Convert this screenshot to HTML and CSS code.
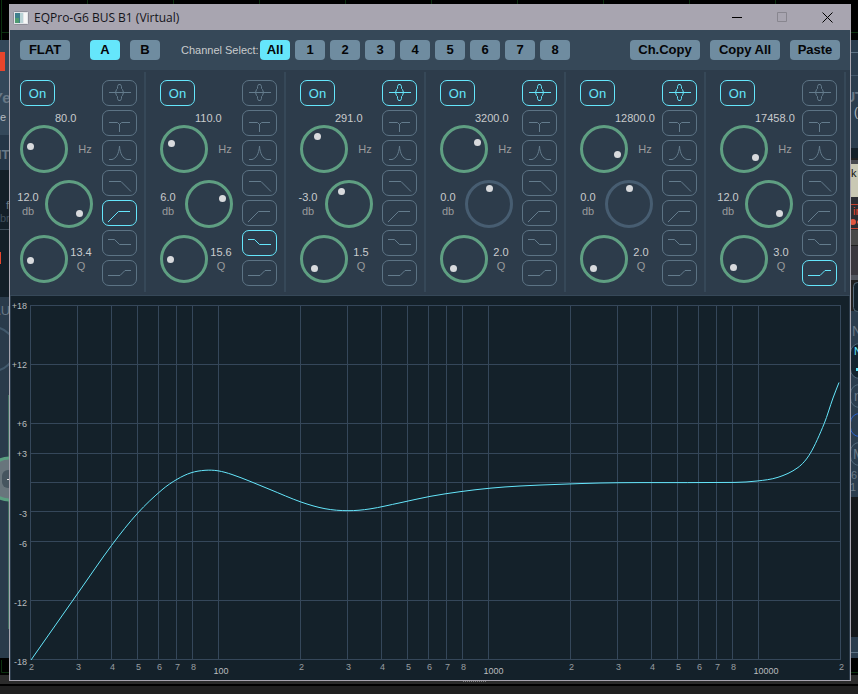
FILE: index.html
```html
<!DOCTYPE html>
<html lang="en">
<head>
<meta charset="utf-8">
<title>EQPro-G6 BUS B1 (Virtual)</title>
<link rel="stylesheet" href="styles.css">
</head>
<body>
<svg class="backdrop backdrop-left" viewBox="0 0 9 694" width="9" height="694" aria-hidden="true">
  <path fill="#000" d="M0 0h9v40H0z"/>
  <path fill="none" stroke="#0b300f" d="M1.5 0V40M2 32.5h7"/>
  <path fill="#34485a" d="M0 40h9v95H0z"/>
  <path fill="#e8452c" d="M0 52h5v19H0z"/>
  <text class="bold dim" x="-7" y="103" font-size="15">Ye</text>
  <text class="light" x="0" y="121" font-size="11">e</text>
  <path fill="#253647" d="M0 135h9v35H0z"/>
  <text class="bold dim" x="-2" y="159" font-size="13">IT</text>
  <path fill="#131f28" d="M0 170h9v127H0z"/>
  <text class="dim" x="6" y="209" font-size="11">f</text>
  <text class="faint" x="0" y="222" font-size="11">br</text>
  <path stroke="#3c4b57" d="M0 229.5h9"/>
  <path fill="#e8452c" d="M0 252h1v12H0z"/>
  <path fill="#2a3b4b" d="M0 297h9v361H0z"/>
  <text class="dim" x="-8" y="315" font-size="13">AU</text>
  <circle cx="-7" cy="349" r="22" fill="none" stroke="#42596c" stroke-width="2"/>
  <path stroke="#3f6f60" d="M8.500 395v234"/>
  <circle cx="9" cy="479" r="21" fill="#68757c" stroke="#5a9f80" stroke-width="3"/>
  <rect x="2" y="470" width="14" height="18" rx="6" fill="#46555f"/>
  <path stroke="#ddd" d="M7 479.500h2"/>
  <path fill="#000" d="M0 658h9v17H0z"/>
  <path fill="none" stroke="#0b300f" d="M1.5 660v12.500H9"/>
  <path fill="#2b2b2b" d="M0 675h9v10H0z"/>
  <path fill="#000" d="M0 684h9v2H0z"/>
</svg>
<svg class="backdrop backdrop-right" viewBox="851 0 7 694" width="7" height="694" aria-hidden="true">
  <path fill="#000" d="M851 0h7v40h-7z"/>
  <path stroke="#0b300f" d="M851 32.500h7"/>
  <path fill="#2b3d4e" d="M851 40h7v108h-7z"/>
  <path stroke="#5b7183" d="M851 52.500h7"/>
  <path stroke="#42566a" d="M851 75.500h7"/>
  <text class="bold dim" x="845" y="102" font-size="14">UT</text>
  <text class="light" x="854" y="116" font-size="12">(</text>
  <path fill="#131f28" d="M851 148h7v10h-7z"/>
  <path fill="#47494f" d="M851 160h7v4h-7z"/>
  <path fill="#c9c8b4" d="M851 164h7v33h-7z"/>
  <text x="851" y="177" font-size="11" fill="#111">k</text>
  <path fill="#2b2d33" d="M851 197h7v33h-7z"/>
  <path stroke="#c54330" d="M851 204.500h7M851 228.500h7"/>
  <text x="853" y="215" font-size="11" fill="#e8452c">in</text>
  <circle cx="853" cy="222" r="3" fill="#e0553f"/>
  <circle cx="859" cy="222" r="2" fill="#e0553f"/>
  <path fill="#494949" d="M851 230h7v15h-7z"/>
  <path fill="#3a383f" d="M851 246h7v29h-7z"/>
  <path fill="#52565f" d="M851 275h7v5h-7z"/>
  <path fill="#2b3d4e" d="M851 311h7v347h-7z"/>
  <rect x="853.500" y="282.500" width="20" height="29" rx="4" fill="#14222c" stroke="#566a7a"/>
  <text class="dim" x="852" y="336" font-size="14">N</text>
  <g fill="none" stroke="#50677a">
    <rect x="850.500" y="343.500" width="30" height="35" rx="9" fill="#14232e"/>
    <rect x="850.500" y="384.500" width="30" height="23" rx="9"/>
    <rect x="850.500" y="413.500" width="30" height="23" rx="9" stroke="#2c62cc"/>
    <rect x="850.500" y="442.500" width="30" height="23" rx="9"/>
  </g>
  <text x="854" y="355" font-size="11" fill="#65e6fb">N</text>
  <path fill="#65e6fb" d="M856 368h2v3h-2z"/>
  <text class="dim" x="854" y="401" font-size="14">n</text>
  <text class="dim" x="853" y="459" font-size="14">M</text>
  <text class="dim" x="851" y="479" font-size="11">6</text>
  <text class="dim" x="850" y="491" font-size="11">1</text>
  <path fill="#15181b" d="M851 497h7v140h-7z"/>
  <path stroke="#5b7183" d="M851 652.500h7"/>
  <path fill="#000" d="M851 658h7v17h-7z"/>
  <path stroke="#0b300f" d="M851 672.500h7"/>
  <path fill="#2b2b2b" d="M851 675h7v10h-7z"/>
  <path fill="#000" d="M851 684h7v2h-7z"/>
</svg>

<svg class="sprite" aria-hidden="true">
  <symbol id="shape-bell" viewBox="0 0 35 26"><path d="M7 12.500H29M13.500 12.500L14.500 9.500L15.500 8.500V6.500L16.500 4.500H18.500L19.500 6.500V8.500L20.500 9.500L21.500 12.500L20.500 15.500L19.500 16.500V18.500L18.500 20.500H16.500L15.500 18.500V16.500L14.500 15.500Z"/></symbol>
  <symbol id="shape-notch" viewBox="0 0 35 26"><path d="M7 12.500H15.500L17.500 14.500L19.500 12.500H28M17.500 14V22"/></symbol>
  <symbol id="shape-peak" viewBox="0 0 35 26"><path d="M7 19.500H10C14 18.500 17 14 17.500 6C18 14 21 18.500 25 19.500H29"/></symbol>
  <symbol id="shape-lowpass" viewBox="0 0 35 26"><path d="M7 11.500H19L29 21.500"/></symbol>
  <symbol id="shape-highpass" viewBox="0 0 35 26"><path d="M6 22L16.500 11.500H28"/></symbol>
  <symbol id="shape-lowshelf" viewBox="0 0 35 26"><path d="M6 9.500H12.500L17.500 14.500H29"/></symbol>
  <symbol id="shape-highshelf" viewBox="0 0 35 26"><path d="M6 15.500H18L23 10.500H29"/></symbol>
</svg>

<main class="window">
  <header class="titlebar">
    <svg class="app-icon" viewBox="0 0 16 14" width="16" height="14" aria-hidden="true">
      <rect x=".5" y=".5" width="15" height="13" rx="1" fill="#e4e6ea" stroke="#8e8d98"/>
      <path fill="#3f7f8c" d="M2 2h5v10H2z"/><path fill="#4f9a70" d="M2 7h4v5H2z"/>
      <path fill="#b9d3d6" d="M7 2h3v10H7z"/><path fill="#f7f7f7" d="M11 2h3v10h-3z"/>
    </svg>
    <h1 class="title">EQPro-G6 BUS B1 (Virtual)</h1>
    <button class="caption" aria-label="Minimize"><svg viewBox="0 0 11 11" width="11" height="11"><path d="M0 5.500H10"/></svg></button>
    <button class="caption" aria-label="Maximize" disabled><svg viewBox="0 0 11 11" width="11" height="11"><path d="M.5 .5H9.500V9.500H.5Z"/></svg></button>
    <button class="caption" aria-label="Close"><svg viewBox="0 0 11 11" width="11" height="11"><path d="M.5 .5L10.500 10.500M10.500 .5L.5 10.500"/></svg></button>
  </header>

  <nav class="toolbar">
    <button class="btn wide">FLAT</button>
    <div class="group memory">
      <button class="btn active">A</button>
      <button class="btn">B</button>
    </div>
    <div class="group channels">
      <span class="channel-label">Channel Select:</span>
      <button class="btn active">All</button>
      <button class="btn">1</button>
      <button class="btn">2</button>
      <button class="btn">3</button>
      <button class="btn">4</button>
      <button class="btn">5</button>
      <button class="btn">6</button>
      <button class="btn">7</button>
      <button class="btn">8</button>
    </div>
    <div class="group clipboard">
      <button class="btn wider">Ch.Copy</button>
      <button class="btn wider">Copy All</button>
      <button class="btn wide">Paste</button>
    </div>
  </nav>

  <section class="bands" id="bands" aria-label="Bands"></section>

  <section class="response" aria-label="Frequency response">
    <svg class="chart" id="chart" viewBox="10 296 840 384"></svg>
  </section>
</main>
<div class="grip"></div>
<script src="script.js"></script>
</body>
</html>
```
FILE: styles.css
```css
* { box-sizing: border-box; }

body {
  margin: 0;
  padding-top: 4px;
  min-height: 100vh;
  position: relative;
  background:
    linear-gradient(#000, #000) 0 684px / 100% 2px no-repeat,
    linear-gradient(#2b2b2b, #2b2b2b) 0 675px / 100% 10px no-repeat,
    linear-gradient(90deg, #0b300f 1px, transparent 1px) 1px 0 / 86px 4px repeat-x,
    linear-gradient(#000, #000) 0 0 / 100% 40px no-repeat,
    #202020;
  font-family: "Liberation Sans", Arial, sans-serif;
  font-size: 11px;
  color: #c9cbcd;
}

button { font: inherit; padding: 0; cursor: pointer; }

.sprite { position: absolute; width: 0; height: 0; }

.backdrop { position: absolute; top: 0; }
.backdrop-left { left: 0; }
.backdrop-right { right: 0; }
.backdrop .bold { font-weight: bold; }
.backdrop .dim { fill: #687886; }
.backdrop .faint { fill: #40505d; }
.backdrop .light { fill: #b4bbc0; }

.window {
  position: relative;
  margin: 0 7px 0 9px;
  border: 1px solid #a8a5b0;
  background: #2d3c4b;
}

.titlebar {
  display: flex;
  align-items: center;
  height: 25px;
  padding-left: 3px;
  background: #a8a5b0;
}
.title {
  flex: 1;
  margin: 0 0 0 5px;
  font: 12px/16px "Open Sans", "Noto Sans", sans-serif;
  color: #14141a;
}
.caption {
  width: 45px;
  height: 25px;
  border: 0;
  background: none;
  display: flex;
  align-items: center;
  justify-content: center;
}
.caption path { fill: none; stroke: #000; }
.caption:disabled path { stroke: #88868f; }

.toolbar {
  display: flex;
  align-items: center;
  height: 40px;
  padding: 0 10px;
  background: #364858;
}
.group { display: flex; align-items: center; }
.memory { gap: 10px; margin-left: 20px; }
.channels { gap: 5px; margin-left: 21px; }
.clipboard { gap: 10px; margin-left: auto; }
.channel-label { width: 74px; white-space: nowrap; }
.btn {
  width: 30px;
  height: 20px;
  border: 0;
  border-radius: 4px;
  background: #6f8ca0;
  color: #050608;
  font-size: 13px;
  font-weight: bold;
  line-height: 20px;
}
.btn.wide { width: 50px; }
.btn.wider { width: 70px; }
.btn.active { background: #65e6fb; }

.bands {
  display: grid;
  grid-template-columns: repeat(6, 1fr);
  padding: 2px 0 3px;
}
.band {
  display: flex;
  justify-content: space-between;
  height: 220px;
  margin-right: 4px;
  padding: 8px 7px 0 1px;
  border-right: 2px solid #364858;
}
.controls { width: 91px; }
.shapes { display: flex; flex-direction: column; gap: 4px; }

.toggle {
  display: block;
  width: 35px;
  height: 26px;
  border: 1px solid #5c7384;
  border-radius: 7px;
  background: none;
}
.toggle svg { display: block; width: 35px; height: 26px; margin: -1px; fill: none; stroke: #647c8d; }
.toggle.on { border-color: #65e6fb; color: #65e6fb; }
.toggle.on svg { stroke: #65e6fb; }
.power { margin-left: 9px; font-size: 13px; }

.freq-value { display: block; margin: 6px 0 0 44px; line-height: 13px; }
.row { display: flex; align-items: center; height: 48px; margin-bottom: 7px; }
.row.freq, .row.q { padding-left: 9px; }
.readout { width: 34px; text-align: center; line-height: 14px; }
.q .readout { width: 26px; }
.readout output, .readout span { display: block; }
.unit { color: #999a9b; }

.knob { position: relative; display: block; width: 48px; height: 48px; }
.knob input { position: absolute; inset: 0; width: 100%; height: 100%; margin: 0; opacity: 0; }
.knob svg { display: block; }
.ring { fill: none; stroke: #5f9f82; stroke-width: 3; }
.neutral .ring { stroke: #475d71; }
.dot { fill: #d8dadd; }

.response {
  border-top: 1px solid #364858;
  background: #14212a;
  box-shadow: inset 1px 0 #2d3c4b, inset -1px 0 #2d3c4b;
}
.chart { display: block; width: 100%; font-size: 9px; }
.grid { stroke: #35475a; fill: none; }
.curve { stroke: #65e6fb; fill: none; }
.db { fill: #b9bcbe; text-anchor: end; }
.decade { fill: #b9bcbe; }
.step { fill: #999ea0; text-anchor: middle; }

.grip {
  width: 24px;
  height: 1px;
  margin: 0 0 12px 54%;
  position: relative;
  background: repeating-linear-gradient(90deg, #777 0 1px, #2b2b2b 1px 2px);
}
```
FILE: script.js
```js
const shapes = ['bell', 'notch', 'peak', 'lowpass', 'highpass', 'lowshelf', 'highshelf'];

// Each knob entry holds the dot's centre inside the 48px dial.
const bands = [
  { freq: '80.0', gain: '12.0', q: '13.4', shape: 'highpass', dots: [[10.5, 21.5], [34.5, 33.5], [10.5, 25.5]] },
  { freq: '110.0', gain: '6.0', q: '15.6', shape: 'lowshelf', dots: [[11.5, 18.5], [37.5, 18.5], [10.5, 24.5]] },
  { freq: '291.0', gain: '-3.0', q: '1.5', shape: 'bell', dots: [[17.5, 11.5], [16.5, 11.5], [14.5, 33.5]] },
  { freq: '3200.0', gain: '0.0', q: '2.0', shape: 'bell', dots: [[37.5, 17.5], [24.5, 8.5], [13.5, 33.5]] },
  { freq: '12800.0', gain: '0.0', q: '2.0', shape: 'bell', dots: [[37.5, 29.5], [24.5, 8.5], [13.5, 33.5]] },
  { freq: '17458.0', gain: '12.0', q: '3.0', shape: 'highshelf', dots: [[35.5, 32.5], [34.5, 33.5], [13.5, 32.5]] },
];

function knob(name, value, min, max, [x, y], neutral) {
  return `<label class="knob${neutral ? ' neutral' : ''}">
    <input type="range" aria-label="${name}" min="${min}" max="${max}" step="0.1" value="${value}">
    <svg viewBox="0 0 48 48" width="48" height="48"><circle class="ring" cx="24" cy="24" r="22.5"/><circle class="dot" cx="${x}" cy="${y}" r="3.5"/></svg>
  </label>`;
}

document.getElementById('bands').innerHTML = bands.map((b, i) => {
  const n = `Band ${i + 1}`;
  return `<div class="band">
    <div class="controls">
      <button class="toggle on power">On</button>
      <output class="freq-value">${b.freq}</output>
      <div class="row freq">${knob(n + ' frequency', b.freq, 20, 20000, b.dots[0])}
        <div class="readout"><span class="unit">Hz</span></div></div>
      <div class="row gain"><div class="readout"><output>${b.gain}</output><span class="unit">db</span></div>
        ${knob(n + ' gain', b.gain, -18, 18, b.dots[1], b.gain === '0.0')}</div>
      <div class="row q">${knob(n + ' Q', b.q, 0, 30, b.dots[2])}
        <div class="readout"><output>${b.q}</output><span class="unit">Q</span></div></div>
    </div>
    <div class="shapes">${shapes.map(s =>
      `<button class="toggle${s === b.shape ? ' on' : ''}" aria-label="${s}"><svg><use href="#shape-${s}"/></svg></button>`).join('')}</div>
  </div>`;
}).join('');

// Frequency response chart
const levels = { '+18': 305.5, '+12': 364.5, '+6': 423.5, '+3': 453.5, '0': 482.5, '-3': 511.5, '-6': 541.5, '-12': 600.5, '-18': 659.5 };
let grid = '';
let labels = '';
for (const [db, y] of Object.entries(levels)) {
  grid += `M30 ${y}H841`;
  if (db !== '0') labels += `<text class="db" x="27" y="${y + (db[0] === '+' ? 3.5 : 5)}">${db}</text>`;
}
for (const decade of [10, 100, 1000, 10000]) {
  for (const k of [1, 2, 3, 4, 5, 6, 7, 8]) {
    const f = decade * k;
    if (f < 20 || f > 20000) continue;
    const x = Math.floor(30.01 + 270 * Math.log10(f / 20)) + 0.5;
    grid += `M${x} 305V660`;
    labels += k === 1
      ? `<text class="decade" x="${x - 5}" y="674">${f}</text>`
      : `<text class="step" x="${x + 1}" y="670">${k}</text>`;
  }
}

const points = [[31, 660], [78, 593], [111.5, 545.5], [137.5, 513.3], [162, 489.8], [177, 479.3], [191, 472.8], [205, 470.3], [218, 470.8],
  [232, 474.5], [250, 481.3], [270, 489.5], [301, 502], [325, 508.7], [348, 510.7], [370, 508.9], [400, 502.8], [430, 496.4], [460, 491.7],
  [490, 488.2], [520, 486], [560, 484.3], [600, 483], [640, 482.6], [735, 482.4], [757, 481], [778, 477.3], [798, 467.5], [810.3, 453.3],
  [824.3, 423.3], [833, 398], [839, 382.5]];

function smooth(p) {
  let d = `M${p[0]}`;
  for (let i = 0; i < p.length - 1; i++) {
    const a = p[i - 1] || p[i], b = p[i], c = p[i + 1], e = p[i + 2] || c;
    const w = (c[0] - b[0]) / 3;
    const s1 = (c[1] - a[1]) / (c[0] - a[0]);
    const s2 = (e[1] - b[1]) / (e[0] - b[0]);
    d += `C${b[0] + w} ${b[1] + w * s1} ${c[0] - w} ${c[1] - w * s2} ${c}`;
  }
  return d;
}

document.getElementById('chart').innerHTML =
  `<path class="grid" d="${grid}"/>${labels}<path class="curve" d="${smooth(points)}"/>`;
```
